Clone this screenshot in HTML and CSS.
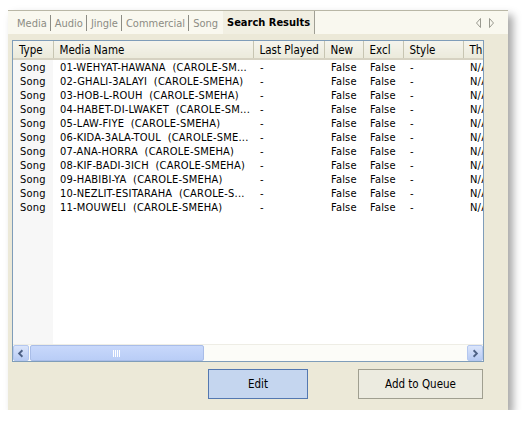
FILE: index.html
```html
<!DOCTYPE html>
<html lang="en">
<head>
    <meta charset="UTF-8">
    <title>Search Results</title>
    <link rel="stylesheet" href="styles.css">
</head>
<body>
    <div class="window">
        <!-- Tab strip -->
        <div class="tabs">
            <span class="tab">Media</span>
            <span class="tab">Audio</span>
            <span class="tab">Jingle</span>
            <span class="tab">Commercial</span>
            <span class="tab last">Song</span>
            <span class="tab active">Search Results</span>
            <span class="arrows">
                <svg width="24" height="12" viewBox="0 0 24 12">
                    <path d="M6.5 1.5 L2.5 6 L6.5 10.5 Z" fill="none" stroke="#9a9a90"/>
                    <path d="M15.5 1.5 L19.5 6 L15.5 10.5 Z" fill="none" stroke="#9a9a90"/>
                </svg>
            </span>
        </div>

        <!-- List view -->
        <div class="list">
            <div class="list-inner">
                <table class="grid">
                    <colgroup>
                        <col class="c-type"><col class="c-name"><col class="c-played">
                        <col class="c-new"><col class="c-excl"><col class="c-style"><col class="c-th">
                    </colgroup>
                    <thead>
                        <tr>
                            <th>Type</th><th>Media Name</th><th>Last Played</th>
                            <th>New</th><th>Excl</th><th>Style</th><th>Th</th>
                        </tr>
                    </thead>
                    <tbody id="rows"></tbody>
                </table>
                <div class="sorted-col"></div>
            </div>
            <div class="hscroll">
                <div class="sb-btn">
                    <svg width="15" height="15" viewBox="0 0 15 15"><path d="M9 4 L5.5 7.5 L9 11" fill="none" stroke="#4d6185" stroke-width="2"/></svg>
                </div>
                <div class="sb-thumb">
                    <svg width="8" height="7" viewBox="0 0 8 7"><path d="M0.5 0V7M2.5 0V7M4.5 0V7M6.5 0V7" stroke="#fff"/></svg>
                </div>
                <div class="sb-track"></div>
                <div class="sb-btn">
                    <svg width="15" height="15" viewBox="0 0 15 15"><path d="M6 4 L9.5 7.5 L6 11" fill="none" stroke="#4d6185" stroke-width="2"/></svg>
                </div>
            </div>
        </div>

        <!-- Buttons -->
        <div class="actions">
            <button class="btn focused">Edit</button>
            <button class="btn">Add to Queue</button>
        </div>
    </div>

    <script>
        var names = [
            "01-WEHYAT-HAWANA  (CAROLE-SM...",
            "02-GHALI-3ALAYI  (CAROLE-SMEHA)",
            "03-HOB-L-ROUH  (CAROLE-SMEHA)",
            "04-HABET-DI-LWAKET  (CAROLE-SM...",
            "05-LAW-FIYE  (CAROLE-SMEHA)",
            "06-KIDA-3ALA-TOUL  (CAROLE-SME...",
            "07-ANA-HORRA  (CAROLE-SMEHA)",
            "08-KIF-BADI-3ICH  (CAROLE-SMEHA)",
            "09-HABIBI-YA  (CAROLE-SMEHA)",
            "10-NEZLIT-ESITARAHA  (CAROLE-S...",
            "11-MOUWELI  (CAROLE-SMEHA)"
        ];
        var tbody = document.getElementById("rows");
        names.forEach(function(name) {
            var tr = document.createElement("tr");
            ["Song", name, "-", "False", "False", "-", "N/A"].forEach(function(v) {
                var td = document.createElement("td");
                td.textContent = v;
                tr.appendChild(td);
            });
            tbody.appendChild(tr);
        });
    </script>
</body>
</html>
```

FILE: styles.css
```css
* {
    margin: 0;
    padding: 0;
    box-sizing: border-box;
}

body {
    background-color: #fff;
    font-family: "DejaVu Sans Condensed", "DejaVu Sans", sans-serif;
    font-size: 11px;
    color: #000;
}

/* Window panel */
.window {
    margin: 10px 0 0 8px;
    width: 500px;
    height: 400px;
    background-color: #ece9d8;
    border-top: 1px solid #b9b7a6;
    box-shadow: 5px 5px 8px rgba(0, 0, 0, 0.35);
    display: flex;
    flex-direction: column;
}

/* Tabs */
.tabs {
    height: 23px;
    background-color: #f9f8ef;
    display: flex;
    align-items: stretch;
    padding-left: 5px;
    color: #8c8c84;
    font-size: 11px;
}

.tab {
    display: flex;
    align-items: center;
    padding: 0 3px 0 4px;
    border-right: 1px solid #8c8c84;
    margin: 4px 0 3px;
    white-space: pre;
}

.tab.last {
    border-right: none;
    padding-right: 5px;
}

.tab.active {
    color: #000;
    font-weight: bold;
    font-size: 11px;
    background-color: #f1efe2;
    border-right: 1px solid #a09f94;
    margin: 0;
    padding: 0 4px;
}

.arrows {
    margin-left: auto;
    display: flex;
    align-items: center;
    padding-right: 10px;
}

/* List view */
.list {
    margin: 6px 0 0 4px;
    width: 472px;
    height: 322px;
    border: 1px solid #7f9db9;
    background-color: #fff;
    display: flex;
    flex-direction: column;
}

.list-inner {
    flex: 1;
    overflow: hidden;
    position: relative;
}

.grid {
    border-collapse: collapse;
    table-layout: fixed;
    width: 490px;
    position: relative;
    z-index: 1;
}

.c-type { width: 40px; }
.c-name { width: 200px; }
.c-played { width: 71px; }
.c-new { width: 39px; }
.c-excl { width: 40px; }
.c-style { width: 60px; }
.c-th { width: 40px; }

.grid th {
    height: 18px;
    font-weight: normal;
    text-align: left;
    padding: 0 6px;
    font-size: 11.5px;
    background: linear-gradient(#f5f4ec, #ebeadb);
    border-right: 1px solid #c7c5b2;
    border-bottom: 2px solid #d6d2c2;
    white-space: nowrap;
    overflow: hidden;
}

.grid td {
    height: 14px;
    padding: 0 6px 0 7px;
    white-space: pre;
    overflow: hidden;
    line-height: 14px;
    font-size: 11px;
    letter-spacing: 0.2px;
}

.grid tbody tr:first-child td {
    padding-top: 1px;
    height: 15px;
}

/* sorted column tint */
.sorted-col {
    position: absolute;
    left: 0;
    top: 0;
    width: 40px;
    height: 100%;
    background-color: #f7f7f7;
}

/* Horizontal scrollbar */
.hscroll {
    height: 17px;
    display: flex;
    background-color: #fcfcf8;
    border-top: 1px solid #eeede5;
}

.sb-btn {
    width: 16px;
    height: 16px;
    background: linear-gradient(#dbe5fb, #b7cbf3);
    border: 1px solid #b4c7ef;
    border-radius: 2px;
    display: flex;
    align-items: center;
    justify-content: center;
}

.sb-thumb {
    width: 174px;
    height: 16px;
    margin-left: 1px;
    background: linear-gradient(#c8d8fb, #b9cdf6);
    border: 1px solid #a9bde8;
    border-radius: 2px;
    display: flex;
    align-items: center;
    justify-content: center;
}

.sb-track {
    flex: 1;
}

/* Action buttons */
.actions {
    display: flex;
    justify-content: flex-end;
    gap: 50px;
    padding: 7px 25px 0 0;
}

.btn {
    height: 30px;
    font-family: "DejaVu Sans Condensed", "DejaVu Sans", sans-serif;
    font-size: 11.5px;
    background-color: #ecebe0;
    border: 1px solid #a09f90;
    color: #000;
    width: 125px;
}

.btn.focused {
    width: 100px;
    background-color: #c5d6ef;
    border: 1px solid #5478b0;
}
```
